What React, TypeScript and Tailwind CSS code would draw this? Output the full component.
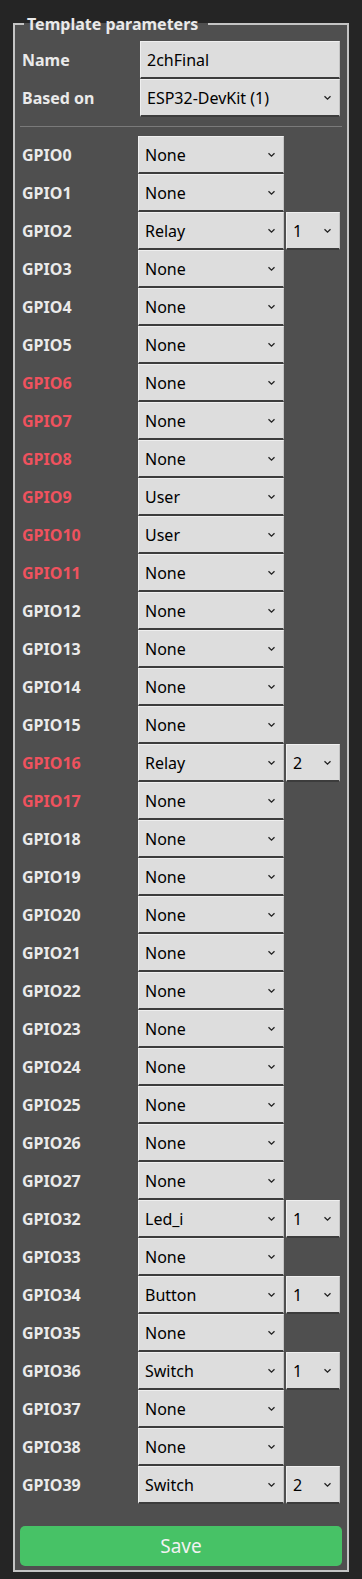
import React from "react"

type Pin = { name: string; value: string; index?: string; warn?: boolean }

const pins: Pin[] = [
  { name: "GPIO0", value: "None" },
  { name: "GPIO1", value: "None" },
  { name: "GPIO2", value: "Relay", index: "1" },
  { name: "GPIO3", value: "None" },
  { name: "GPIO4", value: "None" },
  { name: "GPIO5", value: "None" },
  { name: "GPIO6", value: "None", warn: true },
  { name: "GPIO7", value: "None", warn: true },
  { name: "GPIO8", value: "None", warn: true },
  { name: "GPIO9", value: "User", warn: true },
  { name: "GPIO10", value: "User", warn: true },
  { name: "GPIO11", value: "None", warn: true },
  { name: "GPIO12", value: "None" },
  { name: "GPIO13", value: "None" },
  { name: "GPIO14", value: "None" },
  { name: "GPIO15", value: "None" },
  { name: "GPIO16", value: "Relay", index: "2", warn: true },
  { name: "GPIO17", value: "None", warn: true },
  { name: "GPIO18", value: "None" },
  { name: "GPIO19", value: "None" },
  { name: "GPIO20", value: "None" },
  { name: "GPIO21", value: "None" },
  { name: "GPIO22", value: "None" },
  { name: "GPIO23", value: "None" },
  { name: "GPIO24", value: "None" },
  { name: "GPIO25", value: "None" },
  { name: "GPIO26", value: "None" },
  { name: "GPIO27", value: "None" },
  { name: "GPIO32", value: "Led_i", index: "1" },
  { name: "GPIO33", value: "None" },
  { name: "GPIO34", value: "Button", index: "1" },
  { name: "GPIO35", value: "None" },
  { name: "GPIO36", value: "Switch", index: "1" },
  { name: "GPIO37", value: "None" },
  { name: "GPIO38", value: "None" },
  { name: "GPIO39", value: "Switch", index: "2" },
]

function Chevron() {
  return (
    <svg width="9" height="6" viewBox="0 0 9 6" className="shrink-0">
      <polyline points="1.5,1.2 4.5,4.2 7.5,1.2" fill="none" stroke="#222" strokeWidth="1.3" />
    </svg>
  )
}

function Field({ value, width, arrow = true }: { value: string; width: string; arrow?: boolean }) {
  return (
    <div
      className={`${width} h-[38px] flex items-center justify-between bg-[#dddddd] border-t border-l border-[#efefef] border-r border-r-[#c4c4c4] border-b-2 border-b-[#3c3c3c] pl-[6px] pr-[7px] text-[16px] text-black`}
    >
      <span>{value}</span>
      {arrow && <Chevron />}
    </div>
  )
}

export default function App() {
  return (
    <div
      className="min-h-screen bg-[#252525] px-[13px] pt-[12px] pb-[6px]"
      style={{ fontFamily: '"Noto Sans", "Open Sans", sans-serif' }}
    >
      <fieldset className="border-2 border-[#c4c4c4] bg-[#4f4f4f] px-[5px] pb-[4px]">
        <legend className="ml-[4px] pl-[3px] pr-[10px] text-[16px] font-bold leading-6 text-[#eaeaea]">
          Template parameters
        </legend>

        <div className="pt-[5px]">
          <div className="flex items-center">
            <div className="w-[120px] pl-[2px] text-[16px] font-bold text-[#eaeaea]">Name</div>
            <Field value="2chFinal" width="w-[200px]" arrow={false} />
          </div>
          <div className="flex items-center">
            <div className="w-[120px] pl-[2px] text-[16px] font-bold text-[#eaeaea]">Based on</div>
            <Field value="ESP32-DevKit (1)" width="w-[200px]" />
          </div>
        </div>

        <hr className="mt-[9px] mb-[9px] border-t border-[#7a7a7a]" />

        <div className="flex flex-col">
          {pins.map((p) => (
            <div key={p.name} className="flex items-center">
              <div
                className={`w-[118px] pl-[2px] text-[16px] font-bold ${p.warn ? "text-[#f0525e]" : "text-[#eaeaea]"}`}
              >
                {p.name}
              </div>
              <Field value={p.value} width="w-[146px]" />
              {p.index && (
                <div className="ml-[2px]">
                  <Field value={p.index} width="w-[54px]" />
                </div>
              )}
            </div>
          ))}
        </div>

        <button className="mt-[22px] w-full h-[40px] rounded-[5px] bg-[#47c266] text-[19px] text-[#f2f2f2]">
          Save
        </button>
      </fieldset>
    </div>
  )
}
